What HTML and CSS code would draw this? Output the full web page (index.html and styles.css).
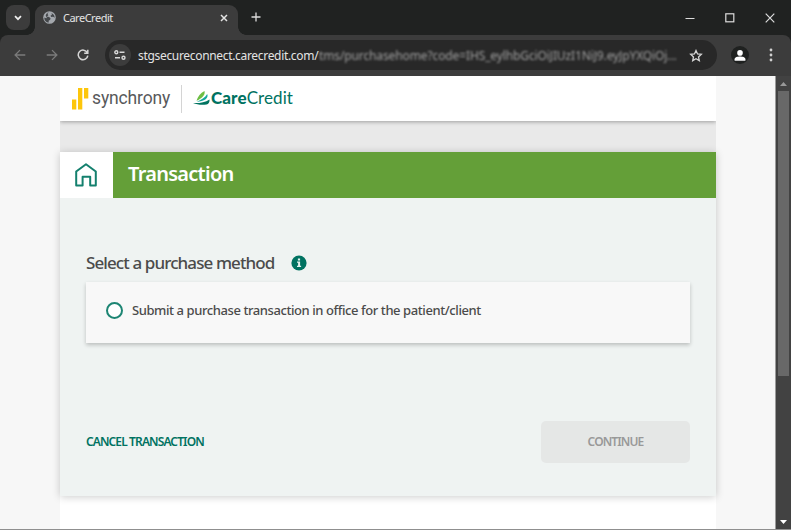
FILE: index.html
```html
<!DOCTYPE html>
<html lang="en">
<head>
<meta charset="UTF-8" />
<meta name="viewport" content="width=device-width, initial-scale=1" />
<title>CareCredit</title>
<link rel="stylesheet" href="styles.css">
</head>
<body>
  <div class="window">
    <!-- Tab strip -->
    <div class="tab-strip">
      <button class="tab-search" aria-label="Search tabs">
        <svg width="8" height="6" viewBox="0 0 8 6"><path d="M1 1.2l3 3 3-3" fill="none" stroke="#eee" stroke-width="1.7"/></svg>
      </button>
      <div class="tab">
        <svg class="globe" width="13" height="13" viewBox="0 0 13 13"><circle cx="6.5" cy="6.5" r="6.3" fill="#a4a8ad"/><path d="M5.8 1.2L4.400 2.800l1 1.500L3.800 5.500l2.400.6 1.400 1.500-.6 1.500-1.200.4-.3 2.200C2.500 11 1.100 9 1.300 6.500l2 .8.6-.5-1.200-2C3 3 4.200 1.600 5.800 1.200zM8.600 2l2.400 2.100.8 2.600-1.700-.9-1.900.3-.7-1.300 1.400-1z" fill="#44474a"/></svg>
        <span class="tab-title">CareCredit</span>
        <svg width="8" height="8" viewBox="0 0 8 8"><path d="M1 1l6 6M7 1L1 7" stroke="#e4e4e4" stroke-width="1.5"/></svg>
      </div>
      <svg class="new-tab" width="10" height="10" viewBox="0 0 10 10"><path d="M5 .5v9M.5 5h9" stroke="#dcdcdc" stroke-width="1.3"/></svg>
      <div class="window-controls">
        <svg width="10" height="10" viewBox="0 0 10 10"><path d="M.5 5.5h9" stroke="#ddd"/></svg>
        <svg width="10" height="10" viewBox="0 0 10 10"><rect x=".8" y=".8" width="8" height="8" fill="none" stroke="#ddd" stroke-width="1.2"/></svg>
        <svg width="10" height="10" viewBox="0 0 10 10"><path d="M.7.7l8.6 8.6M9.3.7L.7 9.3" stroke="#ddd" stroke-width="1.2"/></svg>
      </div>
    </div>

    <!-- Toolbar -->
    <div class="toolbar">
      <div class="nav">
        <svg width="12" height="12" viewBox="0 0 12 12"><path d="M11.3 6H1.2M6 1.1L1.1 6 6 10.9" fill="none" stroke="#7b7b7b" stroke-width="1.3"/></svg>
        <svg width="12" height="12" viewBox="0 0 12 12"><path d="M.7 6h10.1M6 1.100L10.900 6 6 10.900" fill="none" stroke="#7b7b7b" stroke-width="1.3"/></svg>
        <svg width="12" height="12" viewBox="0 0 12 12"><path d="M10.300 3.700A4.800 4.800 0 1 0 10.800 6.600M10.800.8v3.500H7.200" fill="none" stroke="#d5d5d5" stroke-width="1.5"/></svg>
      </div>
      <div class="omnibox">
        <span class="site-info">
          <svg width="12" height="10" viewBox="0 0 12 10"><g fill="none" stroke="#d8d8d8" stroke-width="1.4"><circle cx="2.3" cy="2.3" r="1.5"/><path d="M5.5 2.300h5M1 7.700h5"/><circle cx="9.5" cy="7.7" r="1.5"/></g></svg>
        </span>
        <span class="url">stgsecureconnect.carecredit.com/</span>
        <span class="url-query">tms/purchasehome?code=IHS_eylhbGciOiJIUzI1NiJ9.eyJpYXQiOj...</span>
        <svg class="star" width="14" height="13" viewBox="0 0 14 13"><path d="M7 1.500l1.550 3.450 3.750.4-2.800 2.550.8 3.700L7 9.700l-3.300 1.900.8-3.700L1.700 5.350l3.750-.4z" fill="none" stroke="#d5d5d5" stroke-width="1.3"/></svg>
      </div>
      <span class="profile">
        <svg width="12" height="11" viewBox="0 0 12 11"><circle cx="6" cy="2.9" r="2.8" fill="#fff"/><path d="M.6 10.700V9.300C.6 7.300 3.500 6.600 6 6.600s5.400.7 5.400 2.700v1.400z" fill="#fff"/></svg>
      </span>
      <svg class="menu" width="4" height="14" viewBox="0 0 4 14"><g fill="#d0d0d0"><circle cx="2" cy="2" r="1.4"/><circle cx="2" cy="7" r="1.4"/><circle cx="2" cy="12" r="1.4"/></g></svg>
    </div>

    <div class="viewport">
      <div class="page">
        <header class="brand-bar">
          <svg class="synchrony-mark" width="17" height="22" viewBox="0 0 17 22"><path d="M0 11.500h4.300V21.500H0zM6 0h4.300v21.500H6zM12 0h4.300v10.500H12z" fill="#fdc60b"/></svg>
          <span class="synchrony">synchrony</span>
          <span class="divider"></span>
          <svg class="care-mark" width="17" height="14" viewBox="0 0 17 14">
            <path d="M3.500 9.800C4.800 5.500 7.500 2 11.500 0c1 4-2.700 7.500-8 9.800z" fill="#6ebe44"/>
            <path d="M3.800 10.700C8 8.900 12.300 6.300 14.200 2.900c1.800 4.200-3.200 7.600-10.400 7.800z" fill="#13a89e"/>
            <path d="M0 11.900c5.500.3 12-.2 16.500-3.500.3 2.700-.8 4.500-3 5-4.500.5-9.500.3-13.500-1.500z" fill="#007360"/>
          </svg>
          <span class="carecredit"><b>Care</b><span>Credit</span></span>
        </header>
        <div class="band"></div>

        <main class="card">
          <div class="card-header">
            <a class="home" href="#" aria-label="Home">
              <svg width="22" height="24" viewBox="0 0 22 24"><path d="M1.200 8.500L11 1.200l9.800 7.300v14h-5.600v-8.800H7.600v8.800H1.200z" fill="none" stroke="#14806e" stroke-width="2" stroke-linejoin="round"/></svg>
            </a>
            <h1>Transaction</h1>
          </div>
          <div class="card-body">
            <div class="question">
              <h2>Select a purchase method</h2>
              <svg class="info" width="16" height="16" viewBox="0 0 16 16"><circle cx="8" cy="8" r="7.6" fill="#007261"/><path d="M6.900 3.600h2.200v2H6.900zM6 6.600h3.100v4.200h1V12H6v-1.200h1.100v-3H6z" fill="#e4f2ef"/></svg>
            </div>
            <label class="option">
              <span class="radio"></span>
              <span class="option-text">Submit a purchase transaction in office for the patient/client</span>
            </label>
            <div class="actions">
              <a class="cancel" href="#">CANCEL TRANSACTION</a>
              <button class="continue" disabled>CONTINUE</button>
            </div>
          </div>
        </main>
      </div>
      <div class="scrollbar">
        <svg width="7" height="4" viewBox="0 0 7 4"><path d="M0 4l3.500-4L7 4z" fill="#999"/></svg>
        <div class="thumb"></div>
        <svg width="7" height="4" viewBox="0 0 7 4"><path d="M0 0h7L3.500 4z" fill="#fff"/></svg>
      </div>
    </div>
  </div>
</body>
</html>
```
FILE: styles.css
```css
* {
  box-sizing: border-box;
}
body {
  margin: 0;
  font-family: "Noto Sans", "Open Sans", sans-serif;
  color: #4b4b4b;
  overflow: hidden;
}
svg {
  display: block;
  flex-shrink: 0;
}
button {
  border: 0;
  padding: 0;
  font: inherit;
}
a {
  text-decoration: none;
}

.window {
  height: 530px;
  display: flex;
  flex-direction: column;
  background: #202221;
  border-bottom: 1px solid #8f8f8f;
}

/* Tab strip */
.tab-strip {
  height: 35px;
  display: flex;
  padding: 5px 16px 0 6px;
  color: #e3e3e3;
}
.tab-search {
  width: 24px;
  height: 25px;
  border-radius: 8px;
  background: #3c3c3c;
  display: flex;
  align-items: center;
  justify-content: center;
}
.tab {
  position: relative;
  width: 203px;
  height: 30px;
  margin-left: 5px;
  padding: 0 10px 5px 8px;
  display: flex;
  align-items: center;
  background: #3c3c3c;
  border-radius: 9px 9px 0 0;
}
/* flared feet of the active tab */
.tab::before, .tab::after {
  content: '';
  position: absolute;
  bottom: 0;
  width: 8px;
  height: 8px;
}
.tab::before {
  left: -8px;
  background: radial-gradient(circle at 0 0, transparent 7.5px, #3c3c3c 8px);
}
.tab::after {
  right: -8px;
  background: radial-gradient(circle at 100% 0, transparent 7.5px, #3c3c3c 8px);
}
.tab-title {
  flex: 1;
  margin-left: 7px;
  font-size: 11px;
  letter-spacing: -0.5px;
}
.new-tab {
  margin: 7px 0 0 13px;
}
.window-controls {
  display: flex;
  gap: 30px;
  margin: 8px 0 0 auto;
}

/* Toolbar */
.toolbar {
  height: 41px;
  display: flex;
  align-items: center;
  padding: 0 18px 1px 14px;
  background: #3c3c3c;
  border-radius: 8px 8px 0 0;
}
.nav {
  display: flex;
  gap: 19.5px;
}
.omnibox {
  width: 612px;
  height: 30px;
  margin-left: 16px;
  padding: 0 14px 0 4px;
  display: flex;
  align-items: center;
  border-radius: 15px;
  background: #282828;
  font-size: 12px;
  white-space: nowrap;
}
.site-info {
  width: 22px;
  height: 22px;
  border-radius: 50%;
  background: #3c3c3c;
  display: flex;
  align-items: center;
  justify-content: center;
}
.url {
  width: 181px;
  margin-left: 7px;
  color: #e3e3e3;
  letter-spacing: -0.32px;
}
.url-query {
  width: 359px;
  color: #a0a0a0;
  letter-spacing: -0.12px;
  filter: blur(1.2px);
}
.star {
  margin-left: auto;
}
.profile {
  width: 18px;
  height: 18px;
  margin-left: 14px;
  border-radius: 50%;
  background: #1f2120;
  display: flex;
  align-items: center;
  justify-content: center;
}
.menu {
  margin-left: auto;
}

/* Page area */
.viewport {
  flex: 1;
  min-height: 0;
  display: flex;
  background: #f7f7f7;
}
.page {
  width: 656px;
  margin-left: 60px;
  background: #fff;
}
.brand-bar {
  position: relative;
  height: 45px;
  display: flex;
  align-items: center;
  padding-left: 12px;
  background: #fff;
  box-shadow: 0 1px 4px rgba(0,0,0,0.32);
  clip-path: inset(0 0 -8px 0);
}
.synchrony-mark {
  margin-top: 1px;
}
.synchrony {
  width: 79px;
  margin: -2px 0 0 3px;
  font-family: Roboto, sans-serif;
  font-size: 17.5px;
  letter-spacing: -0.15px;
  color: #58595b;
}
.divider {
  width: 1px;
  height: 28px;
  margin-left: 10px;
  background: #d4d4d4;
}
.care-mark {
  margin: -2px 0 0 11px;
}
.carecredit {
  margin: -2px 0 0 1px;
  font-family: Lato, sans-serif;
  font-size: 17px;
  letter-spacing: 0.1px;
  color: #007261;
  display: flex;
}
.carecredit b {
  font-weight: 900;
}
.band {
  height: 31px;
  background: #e9e9e9;
}

.card {
  position: relative;
  height: 344px;
  background: #eff3f2;
  box-shadow: 0 1px 8px rgba(0,0,0,0.2);
}
.card-header {
  height: 46px;
  display: flex;
  background: #649f38;
}
.home {
  width: 53px;
  height: 46px;
  padding-right: 1px;
  display: flex;
  align-items: center;
  justify-content: center;
  background: #fff;
}
h1 {
  margin: 0 0 0 15px;
  font-size: 20px;
  line-height: 44px;
  font-weight: 600;
  color: #fff;
  letter-spacing: -0.73px;
}
.card-body {
  padding: 50px 26px 0;
}
.question {
  display: flex;
  align-items: center;
  height: 29px;
}
h2 {
  width: 189px;
  margin: 0;
  font-size: 17px;
  font-weight: 500;
  letter-spacing: -0.9px;
  white-space: nowrap;
}
.info {
  margin-left: 16px;
}
.option {
  height: 61px;
  margin-top: 5px;
  padding: 0 0 4px 20px;
  display: flex;
  align-items: center;
  background: #f8f8f8;
  box-shadow: 0 2px 4px rgba(0,0,0,0.22);
}
.radio {
  width: 17px;
  height: 17px;
  border: 2px solid #1d8573;
  border-radius: 50%;
  background: #fff;
}
.option-text {
  margin: -1px 0 0 9px;
  font-size: 13px;
  font-weight: 500;
  letter-spacing: -0.42px;
  white-space: nowrap;
}
.actions {
  margin-top: 78px;
  display: flex;
  align-items: center;
  justify-content: space-between;
}
.cancel {
  margin-top: -2px;
  font-size: 12px;
  font-weight: 600;
  letter-spacing: -0.88px;
  color: #007261;
}
.continue {
  width: 149px;
  height: 42px;
  padding-bottom: 2px;
  border-radius: 5px;
  background: #e5e7e6;
  font-size: 12px;
  font-weight: 600;
  letter-spacing: -0.88px;
  color: #999;
}

/* Scrollbar */
.scrollbar {
  width: 16px;
  margin-left: auto;
  padding: 6px 1px 5px;
  display: flex;
  flex-direction: column;
  align-items: center;
  background: #424242;
  border-left: 1px solid #9b9b9b;
}
.thumb {
  width: 11px;
  height: 285px;
  margin: 5px 0 auto;
  background: #686868;
}
```
